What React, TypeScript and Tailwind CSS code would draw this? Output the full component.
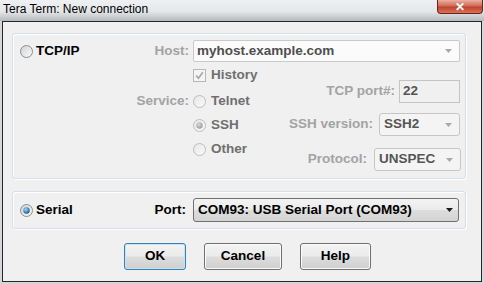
const Arrow = ({ dark = false }: { dark?: boolean }) => (
  <svg width="7" height="4" viewBox="0 0 7 4" className="shrink-0">
    <path d="M0 0h7L3.5 4z" fill={dark ? "#1b1b1b" : "#a9a9a9"} />
  </svg>
);

const Radio = ({ on = false, disabled = false }: { on?: boolean; disabled?: boolean }) => {
  const id = `rb${on ? 1 : 0}${disabled ? 1 : 0}`;
  return (
    <svg width="13" height="13" viewBox="0 0 13 13" className="shrink-0">
      <defs>
        <linearGradient id={`${id}f`} x1="0" y1="0" x2="1" y2="1">
          <stop offset="0" stopColor={disabled ? "#e6e6e6" : "#cfd1d3"} />
          <stop offset="1" stopColor="#fbfbfb" />
        </linearGradient>
        <radialGradient id={`${id}d`} cx="0.4" cy="0.35" r="0.7">
          <stop offset="0" stopColor={disabled ? "#d8d8d8" : "#9fdcff"} />
          <stop offset="1" stopColor={disabled ? "#9a9a9a" : "#104f86"} />
        </radialGradient>
      </defs>
      <circle cx="6.5" cy="6.5" r="6" fill={`url(#${id}f)`} stroke={disabled ? "#bcbcbc" : "#8b8d8f"} />
      {on && <circle cx="6.5" cy="6.5" r="3.2" fill={`url(#${id}d)`} />}
    </svg>
  );
};

const Check = () => (
  <svg width="13" height="13" viewBox="0 0 13 13" className="shrink-0">
    <rect x="0.5" y="0.5" width="12" height="12" fill="#f4f4f4" stroke="#b8b8b8" />
    <path d="M3.2 6.6l2.3 2.6 4.3-6" fill="none" stroke="#a6a6a6" strokeWidth="1.6" />
  </svg>
);

const btn =
  "h-[27px] flex items-center justify-center rounded-[3px] border bg-[linear-gradient(to_bottom,#f3f3f3_0%,#ebebeb_48%,#dddddd_52%,#cfcfcf_100%)] text-black";

export default function App() {
  return (
    <div className="w-[484px] h-[284px] flex flex-col bg-[#d3d7db] font-['Liberation_Sans',Arial,sans-serif] text-[13.5px] font-bold overflow-hidden select-none">
      {/* title bar */}
      <div className="h-[21px] flex items-start justify-between bg-[linear-gradient(to_bottom,#eef0f2_0%,#e4e7ea_55%,#b4b8bc_100%)]">
        <span className="pl-[3px] pt-[2px] text-[12px] leading-[14px] font-normal text-black">
          Tera Term: New connection
        </span>
        <div className="mr-[1px] w-[46px] h-[14px] flex items-center justify-center rounded-b-[4px] border border-t-0 border-[#6a2419] bg-[linear-gradient(to_bottom,#e9b0a3_0%,#d36a55_45%,#c0432b_55%,#d9745a_100%)] text-white text-[12px] leading-none">
          ✕
        </div>
      </div>

      <div className="mx-[2px] mb-[2px] flex-1 flex flex-col border border-[#262626] bg-[#f0f0f0]">
        {/* TCP/IP group */}
        <div className="ml-[9px] mt-[11px] w-[454px] h-[146px] flex flex-col rounded-[3px] border border-[#d5dfe5] shadow-[inset_1px_1px_0_#fff,1px_1px_0_#fff]">
          <div className="mt-[6px] h-[22px] pl-[7px] pr-[5px] flex items-center gap-[4px]">
            <div className="flex-1 flex items-center">
              <Radio />
              <span className="ml-[3px] text-black">TCP/IP</span>
              <span className="ml-auto text-[#a3a3a3]">Host:</span>
            </div>
            <div className="w-[267px] h-full flex items-center justify-between pl-[3px] pr-[7px] rounded-[2px] border border-[#cacaca] bg-[#fbfbfb] text-[#4f4f4f]">
              <span>myhost.example.com</span>
              <Arrow />
            </div>
          </div>

          <div className="flex">
            <div className="w-[176px] flex flex-col">
              <div className="mt-[27px] h-[24px] flex items-center justify-end text-[#a3a3a3]">Service:</div>
            </div>
            <div className="ml-[4px] flex-1 flex flex-col text-[#6f6f6f]">
              <div className="mt-[5px] h-[16px] flex items-center gap-[5px]">
                <Check />
                <span>History</span>
              </div>
              <div className="mt-[6px] h-[24px] flex items-center gap-[5px]">
                <Radio disabled />
                <span>Telnet</span>
              </div>
              <div className="h-[24px] flex items-center gap-[5px]">
                <Radio disabled on />
                <span>SSH</span>
              </div>
              <div className="h-[24px] flex items-center gap-[5px]">
                <Radio disabled />
                <span>Other</span>
              </div>
            </div>
            <div className="pr-[5px] flex flex-col items-end text-[#a3a3a3]">
              <div className="mt-[18px] h-[23px] flex items-center gap-[4px]">
                <span>TCP port#:</span>
                <div className="w-[61px] h-full flex items-center pl-[3px] border border-[#c4c4c4] bg-[#f0f0f0] text-[#555]">22</div>
              </div>
              <div className="mt-[10px] h-[23px] flex items-center gap-[6px]">
                <span>SSH version:</span>
                <div className="w-[81px] h-full flex items-center justify-between pl-[4px] pr-[7px] rounded-[3px] border border-[#c6c6c6] bg-[#f4f4f4] text-[#555]">
                  <span>SSH2</span>
                  <Arrow />
                </div>
              </div>
              <div className="mt-[12px] -mr-[1px] h-[23px] flex items-center gap-[7px]">
                <span>Protocol:</span>
                <div className="w-[87px] h-full flex items-center justify-between pl-[4px] pr-[7px] rounded-[3px] border border-[#c6c6c6] bg-[#f4f4f4] text-[#555]">
                  <span>UNSPEC</span>
                  <Arrow />
                </div>
              </div>
            </div>
          </div>
        </div>

        {/* Serial group */}
        <div className="ml-[9px] mt-[12px] w-[454px] h-[38px] flex items-center pl-[7px] pr-[6px] gap-[7px] rounded-[3px] border border-[#d5dfe5] shadow-[inset_1px_1px_0_#fff,1px_1px_0_#fff]">
          <div className="flex-1 flex items-center">
            <Radio on />
            <span className="ml-[3px] text-black">Serial</span>
            <span className="ml-auto text-black">Port:</span>
          </div>
          <div className="w-[266px] h-[24px] flex items-center justify-between pl-[4px] pr-[5px] rounded-[3px] border border-[#707070] bg-[linear-gradient(to_bottom,#f3f3f3_0%,#ebebeb_48%,#dddddd_52%,#d3d3d3_100%)] text-black">
            <span>COM93: USB Serial Port (COM93)</span>
            <Arrow dark />
          </div>
        </div>

        {/* buttons */}
        <div className="mt-[14px] pl-[121px] flex gap-[18px]">
          <div className={`${btn} w-[62px] border-[#3c7fb1] shadow-[inset_0_0_0_1px_#bfe6f8]`}>OK</div>
          <div className={`${btn} w-[78px] border-[#707070] shadow-[inset_0_0_0_1px_#fbfbfb]`}>Cancel</div>
          <div className={`${btn} w-[71px] border-[#707070] shadow-[inset_0_0_0_1px_#fbfbfb]`}>Help</div>
        </div>
      </div>
    </div>
  );
}
